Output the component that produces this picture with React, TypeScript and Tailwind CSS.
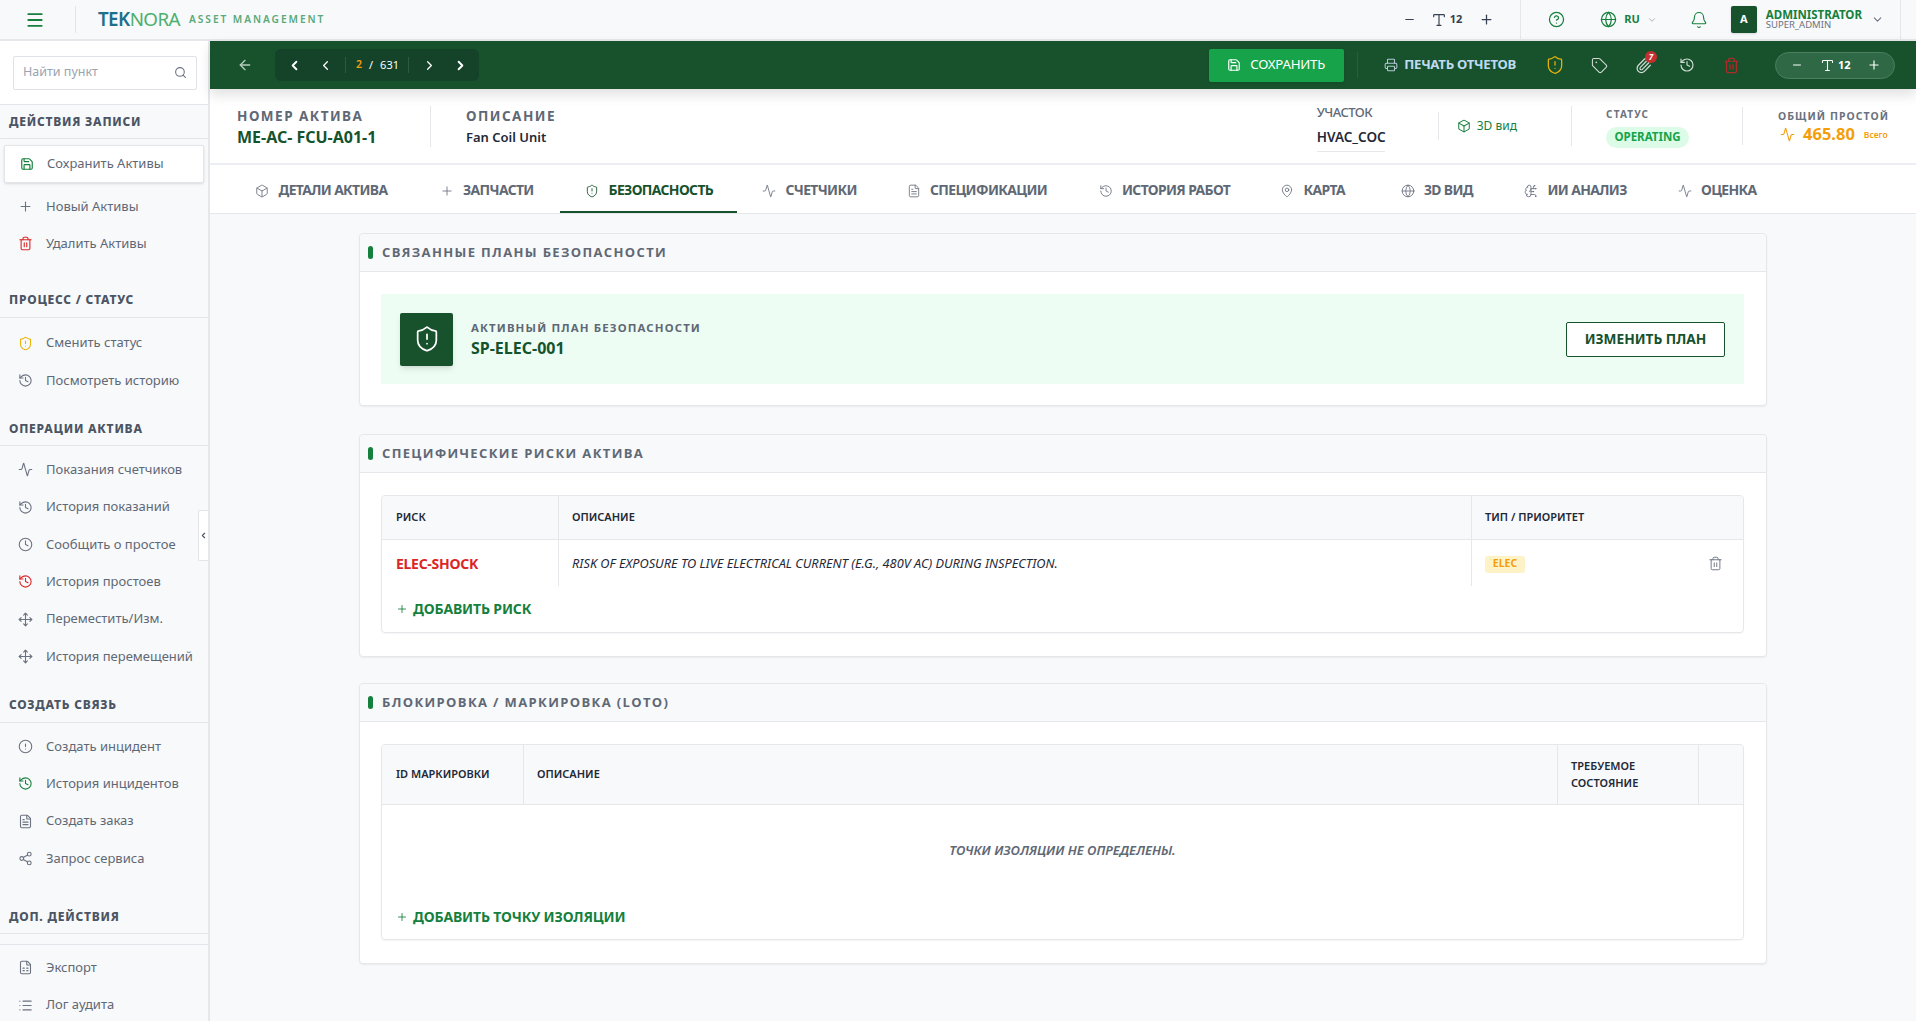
import React from "react";
import {
  Menu, ArrowLeft, ChevronLeft, ChevronRight, ChevronDown, Search, Save, Plus, Trash2, ShieldAlert, History, Activity, Clock, Move,
  CircleAlert, FileText, Share2, FileSpreadsheet, List, Type, Minus, CircleHelp, Globe, Bell, Printer, Tag, Paperclip, Box, MapPin, BrainCircuit,
} from "lucide-react";

const font = { fontFamily: '"Noto Sans", "Open Sans", sans-serif' };

function SideHead({ children, cls = "" }: { children: React.ReactNode; cls?: string }) {
  return (
    <div className={"h-[34px] flex items-center pl-[9px] text-[12px] font-extrabold tracking-[0.065em] text-[#4b5563] border-b border-[#e2e5e9] whitespace-nowrap " + cls}>
      {children}
    </div>
  );
}

function SideItem({ icon: I, label, color = "text-[#6b7280]" }: { icon: any; label: string; color?: string }) {
  return (
    <div className="h-[37.3px] flex items-center pl-[18px]">
      <I size={15} strokeWidth={1.75} className={"shrink-0 " + color} />
      <span className="ml-[13px] text-[13px] text-[#5f6875] whitespace-nowrap">{label}</span>
    </div>
  );
}

function Sidebar() {
  return (
    <aside className="w-[210px] shrink-0 bg-[#f8f9fb] border-r-2 border-[#e5e7eb] overflow-hidden relative">
      <div className="h-[64px] flex items-center pl-[13px] bg-white border-b border-[#e2e5e9]">
        <div className="w-[184px] h-[34px] border border-[#dfe2e6] rounded-[2px] bg-white flex items-center justify-between pl-[9px] pr-[9px]">
          <span className="text-[12.5px] text-[#9ca3af]">Найти пункт</span>
          <Search size={13} className="text-[#6b7280]" />
        </div>
      </div>
      <SideHead>ДЕЙСТВИЯ ЗАПИСИ</SideHead>
      <div className="pt-[6px]">
        <div className="mx-[4px] h-[38px] bg-white border border-[#e2e5e9] rounded-[2px] shadow-sm flex items-center pl-[15px]">
          <Save size={14} strokeWidth={2} className="text-[#15803d]" />
          <span className="ml-[13px] text-[13px] text-[#5f6875]">Сохранить Активы</span>
        </div>
        <div className="mt-[5px]">
          <SideItem icon={Plus} label="Новый Активы" />
          <SideItem icon={Trash2} label="Удалить Активы" color="text-[#dc2626]" />
        </div>
      </div>
      <SideHead cls="mt-[21px]">ПРОЦЕСС / СТАТУС</SideHead>
      <div className="pt-[7px]">
        <SideItem icon={ShieldAlert} label="Сменить статус" color="text-[#eab308]" />
        <SideItem icon={History} label="Посмотреть историю" />
      </div>
      <SideHead cls="mt-[13px]">ОПЕРАЦИИ АКТИВА</SideHead>
      <div className="pt-[5px]">
        <SideItem icon={Activity} label="Показания счетчиков" />
        <SideItem icon={History} label="История показаний" />
        <SideItem icon={Clock} label="Сообщить о простое" />
        <SideItem icon={History} label="История простоев" color="text-[#dc2626]" />
        <SideItem icon={Move} label="Переместить/Изм." />
        <SideItem icon={Move} label="История перемещений" />
      </div>
      <SideHead cls="mt-[14px]">СОЗДАТЬ СВЯЗЬ</SideHead>
      <div className="pt-[5px]">
        <SideItem icon={CircleAlert} label="Создать инцидент" />
        <SideItem icon={History} label="История инцидентов" color="text-[#15803d]" />
        <SideItem icon={FileText} label="Создать заказ" />
        <SideItem icon={Share2} label="Запрос сервиса" />
      </div>
      <SideHead cls="mt-[23px]">ДОП. ДЕЙСТВИЯ</SideHead>
      <div className="mt-[10px] border-t border-[#e2e5e9] pt-[4px]">
        <SideItem icon={FileSpreadsheet} label="Экспорт" />
        <SideItem icon={List} label="Лог аудита" />
      </div>
      <div className="absolute left-[198px] top-[469px] w-[10px] h-[51px] bg-white border border-r-0 border-[#e2e5e9] rounded-l-[2px] flex items-center justify-center">
        <ChevronLeft size={9} strokeWidth={3} className="text-[#4b5563]" />
      </div>
    </aside>
  );
}

function TopBar() {
  return (
    <header className="h-[41px] shrink-0 bg-[#f8f9fb] border-b-2 border-[#e5e7eb] flex items-center">
      <Menu size={20} strokeWidth={2.25} className="ml-[25px] text-[#15803d]" />
      <div className="ml-[30px] w-px h-[27px] bg-[#e2e5e9]" />
      <div className="ml-[22px] flex items-center">
        <span className="text-[18.8px] leading-none tracking-[-0.03em] font-normal">
          <span className="text-[#1d6f8a] font-semibold">TEK</span>
          <span className="text-[#4caf6d]">NORA</span>
        </span>
        <span className="ml-[9px] text-[10.2px] font-semibold tracking-[0.19em] text-[#5aa978]">ASSET MANAGEMENT</span>
      </div>
      <div className="ml-auto flex items-center text-[#374151]">
        <Minus size={13} strokeWidth={2} />
        <Type size={16} strokeWidth={1.75} className="ml-[15px]" />
        <span className="ml-[3px] text-[11px] font-bold">12</span>
        <Plus size={15} strokeWidth={2} className="ml-[17px]" />
      </div>
      <div className="ml-[26px] w-px h-[40px] bg-[#e5e7eb]" />
      <CircleHelp size={17} strokeWidth={1.75} className="ml-[27px] text-[#15803d]" />
      <Globe size={17} strokeWidth={1.75} className="ml-[35px] text-[#15803d]" />
      <span className="ml-[7px] text-[11px] font-bold text-[#15803d]">RU</span>
      <ChevronDown size={10} className="ml-[7px] text-[#9ca3af]" />
      <Bell size={18} strokeWidth={1.5} className="ml-[33px] text-[#15803d]" />
      <div className="ml-[23px] w-[26px] h-[27px] bg-[#17522d] rounded-[2px] shadow flex items-center justify-center text-white text-[11px] font-bold">A</div>
      <div className="ml-[9px] flex flex-col">
        <span className="text-[11.5px] leading-[11px] font-bold text-[#15803d]">ADMINISTRATOR</span>
        <span className="text-[9.5px] leading-[10px] text-[#6b7280]">SUPER_ADMIN</span>
      </div>
      <ChevronDown size={13} className="ml-[9px] text-[#6b7280]" />
      <div className="ml-[16px] w-px h-[40px] bg-[#e5e7eb]" />
      <div className="w-[15px]" />
    </header>
  );
}

function ActionBar() {
  return (
    <div className="h-[48px] shrink-0 bg-[#17522d] flex items-center shadow-[0_6px_12px_rgba(0,0,0,0.12)] relative z-10">
      <ArrowLeft size={16} strokeWidth={2} className="ml-[27px] text-[#b6cbbd]" />
      <div className="ml-[22px] w-[204px] h-[32px] rounded-[6px] bg-[#14432a] flex items-center text-white">
        <ChevronLeft size={15} strokeWidth={3} className="ml-[12px]" />
        <ChevronLeft size={15} strokeWidth={2} className="ml-[16px]" />
        <div className="ml-[12px] w-px h-[16px] bg-[#2c5c3e]" />
        <span className="ml-[10px] text-[10.5px] font-semibold text-[#f59e0b]">2</span>
        <span className="ml-[7px] text-[11px] text-white">/</span>
        <span className="ml-[7px] text-[11px] text-white">631</span>
        <div className="ml-[9px] w-px h-[16px] bg-[#2c5c3e]" />
        <ChevronRight size={15} strokeWidth={2} className="ml-[13px]" />
        <ChevronRight size={15} strokeWidth={3} className="ml-[16px]" />
      </div>
      <div className="ml-auto flex items-center">
        <div className="w-[135px] h-[33px] bg-[#16a34a] rounded-[2px] shadow flex items-center text-white">
          <Save size={14} strokeWidth={2} className="ml-[18px]" />
          <span className="ml-[9px] text-[13.3px] tracking-[-0.02em]">СОХРАНИТЬ</span>
        </div>
        <div className="ml-[13px] w-px h-[26px] bg-[#2c5c3e]" />
        <Printer size={14} strokeWidth={1.75} className="ml-[26px] text-[#b7c9d6]" />
        <span className="ml-[6px] text-[13.2px] font-bold tracking-[-0.02em] text-[#bfdbf2] whitespace-nowrap">ПЕЧАТЬ ОТЧЕТОВ</span>
        <ShieldAlert size={20} strokeWidth={1.5} className="ml-[29px] text-[#eab308]" />
        <Tag size={17} strokeWidth={1.5} className="ml-[26px] text-[#d1dbd4]" />
        <div className="ml-[27px] relative">
          <Paperclip size={17} strokeWidth={1.75} className="text-[#d1dbd4]" />
          <span className="absolute -right-[5px] -top-[6px] w-[12px] h-[12px] rounded-full bg-[#c62f2f] text-white text-[8px] font-bold italic flex items-center justify-center">7</span>
        </div>
        <History size={16} strokeWidth={1.75} className="ml-[27px] text-[#d1dbd4]" />
        <Trash2 size={17} strokeWidth={1.75} className="ml-[28px] text-[#b02a2a]" />
        <div className="ml-[35px] w-[120px] h-[27px] rounded-full bg-[#2e6845] border border-[#4b7f60] flex items-center text-white">
          <Minus size={12} strokeWidth={2} className="ml-[15px]" />
          <Type size={15} strokeWidth={1.75} className="ml-[17px]" />
          <span className="ml-[3px] text-[11px] font-bold">12</span>
          <Plus size={14} strokeWidth={2} className="ml-[16px]" />
        </div>
        <div className="w-[21px]" />
      </div>
    </div>
  );
}

function SubHeader() {
  return (
    <div className="h-[76px] shrink-0 bg-white border-b-2 border-[#eceef1] flex items-center">
      <div className="ml-[27px] w-[194px] h-[41px] flex flex-col justify-center border-r border-[#e5e7eb]">
        <span className="mt-[2px] text-[13.5px] leading-[18px] font-bold tracking-[0.11em] text-[#5f6875] whitespace-nowrap">НОМЕР АКТИВА</span>
        <span className="mt-[1px] text-[16px] leading-[22px] font-bold text-[#14532d] whitespace-nowrap">ME-AC- FCU-A01-1</span>
      </div>
      <div className="ml-[35px] flex flex-col justify-center">
        <span className="mt-[2px] text-[13.5px] leading-[18px] font-bold tracking-[0.11em] text-[#5f6875]">ОПИСАНИЕ</span>
        <span className="mt-[1px] text-[13px] leading-[22px] font-semibold text-[#1f2937]">Fan Coil Unit</span>
      </div>
      <div className="ml-auto flex items-center">
        <div className="w-[121px] flex flex-col">
          <span className="text-[13px] leading-[22px] font-medium tracking-[-0.04em] text-[#5f6875]">УЧАСТОК</span>
          <span className="mt-[3px] text-[13.5px] leading-[22px] font-semibold w-[68px] text-[#1f2937] border-b border-[#e5e7eb] pb-[3px] box-content">HVAC_COC</span>
        </div>
        <div className="w-px h-[28px] bg-[#e5e7eb]" />
        <Box size={14} strokeWidth={1.75} className="ml-[18px] text-[#15803d]" />
        <span className="ml-[6px] text-[12px] text-[#15803d] whitespace-nowrap">3D вид</span>
        <div className="ml-[54px] w-px h-[40px] bg-[#e5e7eb]" />
        <div className="ml-[34px] w-[136px] flex flex-col items-start pt-[2px]">
          <span className="text-[10px] leading-[14px] font-bold tracking-[0.12em] text-[#6b7280]">СТАТУС</span>
          <span className="mt-[6px] w-[83px] h-[21px] rounded-full bg-[#dcfce7] flex items-center justify-center text-[11.5px] font-bold text-[#16a34a]">OPERATING</span>
        </div>
        <div className="w-px h-[38px] bg-[#e5e7eb]" />
        <div className="ml-[35px] w-[138px] flex flex-col">
          <span className="text-[10.5px] leading-[14px] font-bold tracking-[0.1em] text-[#6b7280] whitespace-nowrap">ОБЩИЙ ПРОСТОЙ</span>
          <div className="flex items-center mt-[2px] ml-[2px]">
            <Activity size={15} strokeWidth={1.75} className="text-[#f59e0b]" />
            <span className="ml-[8px] text-[16.5px] font-bold text-[#f59e0b] leading-[18px]">465.80</span>
            <span className="ml-[9px] text-[8.5px] font-semibold text-[#f59e0b] mt-[2px]">Всего</span>
          </div>
        </div>
      </div>
    </div>
  );
}

const tabs: { icon: any; label: string; active?: boolean; w: string }[] = [
  { icon: Box, label: "ДЕТАЛИ АКТИВА", w: "w-[110px]" },
  { icon: Plus, label: "ЗАПЧАСТИ", w: "w-[71px]" },
  { icon: ShieldAlert, label: "БЕЗОПАСНОСТЬ", active: true, w: "w-[102.5px]" },
  { icon: Activity, label: "СЧЕТЧИКИ", w: "w-[70px]" },
  { icon: FileText, label: "СПЕЦИФИКАЦИИ", w: "w-[117.5px]" },
  { icon: History, label: "ИСТОРИЯ РАБОТ", w: "w-[107px]" },
  { icon: MapPin, label: "КАРТА", w: "w-[46px]" },
  { icon: Globe, label: "3D ВИД", w: "w-[49px]" },
  { icon: BrainCircuit, label: "ИИ АНАЛИЗ", w: "w-[79px]" },
  { icon: Activity, label: "ОЦЕНКА", w: "w-[55px]" },
];

function Tabs() {
  return (
    <div className="h-[49px] shrink-0 bg-white border-b border-[#e5e7eb] flex items-stretch pl-[19.5px]">
      {tabs.map((t) => (
        <div key={t.label} className={"flex items-center px-[25.5px] pt-[5px] border-b-[2.5px] " + (t.active ? "border-[#17522d]" : "border-transparent")}>
          <t.icon size={14} strokeWidth={1.5} className={"shrink-0 " + (t.active ? "text-[#17522d]" : "text-[#6b7280]")} />
          <span className={"ml-[9.5px] text-[13.9px] font-bold tracking-[-0.045em] whitespace-nowrap " + t.w + (t.active ? " text-[#17522d]" : " text-[#5f6875]")}>{t.label}</span>
        </div>
      ))}
    </div>
  );
}

function Card({ title, children, cls = "" }: { title: string; children: React.ReactNode; cls?: string }) {
  return (
    <section className={"w-[1408px] bg-white border border-[#e5e7eb] rounded-[4px] shadow-[0_1px_2px_rgba(0,0,0,0.06)] " + cls}>
      <div className="h-[38px] bg-[#f8f9fb] border-b border-[#e5e7eb] rounded-t-[4px] flex items-center pl-[8px]">
        <span className="w-[5px] h-[13px] rounded-full bg-[#15803d]" />
        <span className="ml-[9px] pt-[1px] text-[13px] font-bold tracking-[0.105em] text-[#5f6875] whitespace-nowrap" style={{ fontFamily: '"Open Sans", sans-serif' }}>{title}</span>
      </div>
      {children}
    </section>
  );
}

function Th({ children, w, last, cls = "pl-[13px]" }: { children?: React.ReactNode; w: string; last?: boolean; cls?: string }) {
  return (
    <div className={"h-full flex items-center pb-[2px] text-[11px] leading-[17px] font-semibold text-[#1f2937] " + cls + " " + w + (last ? "" : " border-r border-[#e5e7eb]")}>
      {children}
    </div>
  );
}

function AddLink({ label }: { label: string }) {
  return (
    <div className="flex items-center pl-[14px] text-[#15803d]">
      <Plus size={12} strokeWidth={1.75} />
      <span className="ml-[5px] text-[14px] font-bold tracking-[-0.01em]">{label}</span>
    </div>
  );
}

function Content() {
  return (
    <main className="flex-1 min-h-0 overflow-hidden bg-[#f8f9fb] pl-[149px] pt-[19px]">
      <Card title="СВЯЗАННЫЕ ПЛАНЫ БЕЗОПАСНОСТИ">
        <div className="pl-[21px] pr-[22px] pt-[22px] pb-[21px]">
          <div className="h-[90px] bg-[#eefdf4] flex items-center pl-[19px] pr-[19px]">
            <div className="w-[53px] h-[53px] bg-[#17522d] rounded-[2px] shadow-md flex items-center justify-center">
              <ShieldAlert size={28} strokeWidth={1.5} className="text-white" />
            </div>
            <div className="ml-[18px] flex flex-col">
              <span className="text-[11.4px] leading-[16px] font-bold tracking-[0.1em] text-[#5f6875]">АКТИВНЫЙ ПЛАН БЕЗОПАСНОСТИ</span>
              <span className="text-[16px] leading-[22px] font-bold text-[#14532d] mt-[1px]">SP-ELEC-001</span>
            </div>
            <div className="ml-auto w-[159px] h-[35px] bg-white border border-[#17522d] rounded-[2px] flex items-center justify-center text-[13.7px] font-bold text-[#17522d]">ИЗМЕНИТЬ ПЛАН</div>
          </div>
        </div>
      </Card>

      <Card title="СПЕЦИФИЧЕСКИЕ РИСКИ АКТИВА" cls="mt-[28px]">
        <div className="px-[21px] pt-[22px] pb-[23px]">
          <div className="w-[1363px] h-[138px] border border-[#e5e7eb] rounded-[4px] shadow-[0_1px_1px_rgba(0,0,0,0.04)]">
            <div className="h-[44px] bg-[#f8f9fb] border-b border-[#e5e7eb] rounded-t-[4px] flex">
              <Th w="w-[177px]" cls="pl-[14px]">РИСК</Th>
              <Th w="w-[913px]">ОПИСАНИЕ</Th>
              <Th w="flex-1" last>ТИП / ПРИОРИТЕТ</Th>
            </div>
            <div className="h-[46px] flex">
              <div className="w-[177px] border-r border-[#e5e7eb] flex items-center pl-[14px] text-[14px] font-bold text-[#dc2626] tracking-[-0.02em]">ELEC-SHOCK</div>
              <div className="w-[913px] border-r border-[#e5e7eb] flex items-center pl-[13px] pt-[1px] text-[12.75px] italic text-[#1f2937] whitespace-nowrap">RISK OF EXPOSURE TO LIVE ELECTRICAL CURRENT (E.G., 480V AC) DURING INSPECTION.</div>
              <div className="flex-1 flex items-center pl-[13px] pr-[20px] justify-between">
                <span className="mt-[2px] w-[40px] h-[17px] rounded-[3px] bg-[#fef3c7] flex items-center justify-center text-[10.5px] font-bold text-[#f59e0b]">ELEC</span>
                <Trash2 size={15} strokeWidth={1.5} className="text-[#6b7280]" />
              </div>
            </div>
            <div className="mt-[12px]"><AddLink label="ДОБАВИТЬ РИСК" /></div>
          </div>
        </div>
      </Card>

      <Card title="БЛОКИРОВКА / МАРКИРОВКА (LOTO)" cls="mt-[26px]">
        <div className="px-[21px] pt-[22px] pb-[23px]">
          <div className="w-[1363px] h-[196px] border border-[#e5e7eb] rounded-[4px] shadow-[0_1px_1px_rgba(0,0,0,0.04)]">
            <div className="h-[60px] bg-[#f8f9fb] border-b border-[#e5e7eb] rounded-t-[4px] flex">
              <Th w="w-[142px]" cls="pl-[14px]">ID МАРКИРОВКИ</Th>
              <Th w="w-[1034px]">ОПИСАНИЕ</Th>
              <Th w="w-[141px]"><span>ТРЕБУЕМОЕ<br />СОСТОЯНИЕ</span></Th>
              <Th w="flex-1" last />
            </div>
            <div className="h-[92px] flex items-center justify-center text-[13.2px] font-semibold italic text-[#5f6875]">ТОЧКИ ИЗОЛЯЦИИ НЕ ОПРЕДЕЛЕНЫ.</div>
            <div className="mt-[9px]"><AddLink label="ДОБАВИТЬ ТОЧКУ ИЗОЛЯЦИИ" /></div>
          </div>
        </div>
      </Card>
    </main>
  );
}

export default function App() {
  return (
    <div className="w-[1916px] h-[1021px] flex flex-col overflow-hidden bg-[#f8f9fb]" style={font}>
      <TopBar />
      <div className="flex-1 min-h-0 flex">
        <Sidebar />
        <div className="flex-1 min-w-0 flex flex-col">
          <ActionBar />
          <SubHeader />
          <Tabs />
          <Content />
        </div>
      </div>
    </div>
  );
}
